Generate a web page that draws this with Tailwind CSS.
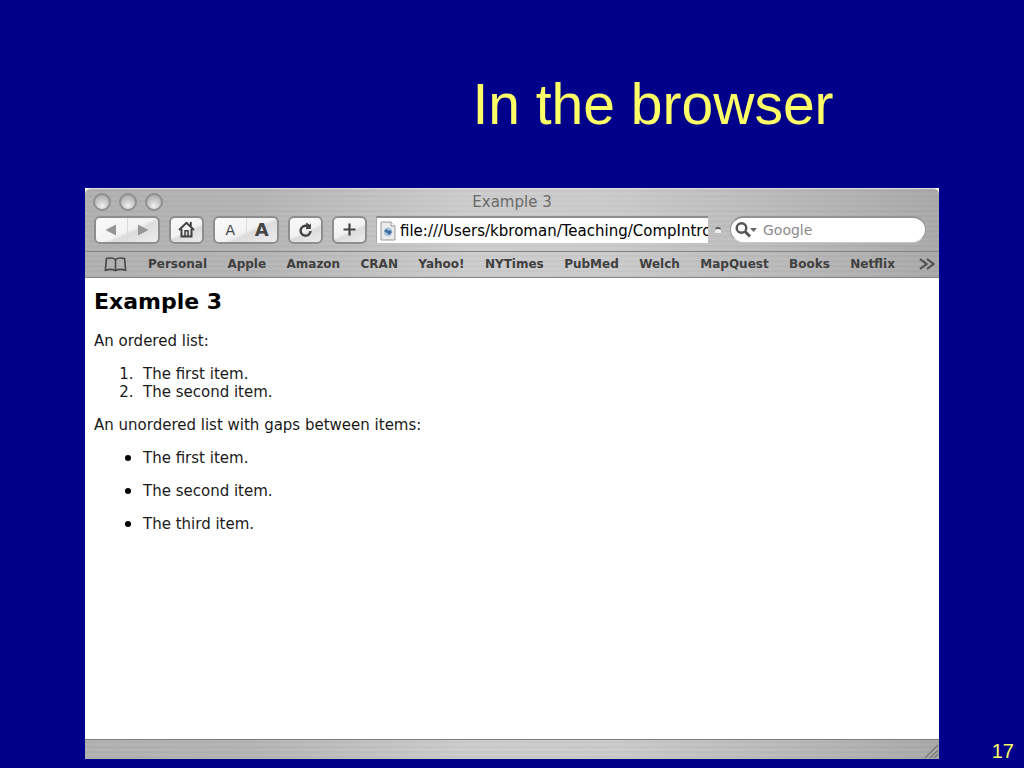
<!DOCTYPE html>
<html lang="en">
<head>
  <meta charset="UTF-8" />
  <meta name="viewport" content="width=device-width, initial-scale=1.0"/>
  <title>In the browser</title>
  <script src="https://cdn.jsdelivr.net/npm/@tailwindcss/browser@4"></script>
  <style>
    @counter-style spaced-decimal {
      system: extends decimal;
      suffix: ".\00a0\00a0";
    }

    .numbered {
      list-style-type: spaced-decimal;
    }

    .metal {
      background-image:
        repeating-linear-gradient(to bottom, rgba(255,255,255,.06) 0 1px, rgba(0,0,0,.02) 1px 3px, rgba(255,255,255,.02) 3px 5px),
        linear-gradient(to right, #b0b0b0 0%, #b4b4b4 20%, #cccccc 45%, #cacaca 62%, #b6b6b6 85%, #a8a8a8 100%);
    }

    .aqua {
      background-image: linear-gradient(155deg, #fafafa 0%, #f2f2f2 52%, #dcdcdc 60%, #ededed 100%);
    }

    .light {
      background-image: radial-gradient(circle at 50% 80%, #f0f0f0 0%, #cacaca 45%, #a0a0a0 100%);
    }
  </style>
</head>
<body class="min-h-screen flex flex-col bg-[#00008a] font-['Liberation_Sans',sans-serif] text-[#ffff66]">
  <header class="h-[188px] pl-[282px] pt-5 flex items-center justify-center">
    <h1 class="text-[57px] leading-[64px]">In the browser</h1>
  </header>

  <main class="flex-1 grid grid-cols-[85px_1fr_85px] pb-[9px]">
    <!-- Browser window -->
    <section class="col-start-2 flex flex-col bg-white text-black font-['DejaVu_Sans',sans-serif]">
      <div class="metal rounded-t-md border-t border-[#dcdcdc]">
        <!-- Title bar -->
        <div class="grid grid-cols-[1fr_auto_1fr] items-center h-[25px] px-2">
          <div class="flex gap-2">
            <button aria-label="Close" class="light size-[18px] rounded-full border-2 border-[#909090]"></button>
            <button aria-label="Minimize" class="light size-[18px] rounded-full border-2 border-[#909090]"></button>
            <button aria-label="Zoom" class="light size-[18px] rounded-full border-2 border-[#909090]"></button>
          </div>
          <h2 class="text-[15px] leading-[18px] text-[#6a6a6a]">Example 3</h2>
        </div>

        <!-- Toolbar -->
        <div class="flex items-center gap-[9px] h-[37px] pl-[9px] pr-[13px] pb-[7px] pt-px">
          <div class="aqua flex w-[66px] h-7 rounded-md border-2 border-[#8e8e8e] overflow-hidden">
            <button aria-label="Back" class="flex-1 flex items-center justify-center border-r border-[#dadada]">
              <svg class="w-3 h-3" viewBox="0 0 12 12" fill="#969696"><path d="M11 0.5V11.5L0.5 6Z"/></svg>
            </button>
            <button aria-label="Forward" class="flex-1 flex items-center justify-center">
              <svg class="w-3 h-3" viewBox="0 0 12 12" fill="#969696"><path d="M1 0.5V11.5L11.5 6Z"/></svg>
            </button>
          </div>
          <button aria-label="Home" class="aqua flex items-center justify-center w-[35px] h-7 rounded-md border-2 border-[#8e8e8e]">
            <svg class="w-[17px] h-[17px]" viewBox="0 0 17 17" fill="none" stroke="#404040" stroke-width="2">
              <path d="M1 9L8.5 1.8L16 9"/>
              <path d="M3.5 8V15.5H13.5V8"/>
              <path d="M12.8 1V5" />
              <path d="M7 15V9.8H10V15" stroke-width="1.5"/>
            </svg>
          </button>
          <div class="aqua flex w-[66px] h-7 rounded-md border-2 border-[#8e8e8e] overflow-hidden text-[#444]">
            <button aria-label="Smaller text" class="flex-1 text-sm leading-6 border-r border-[#dadada]">A</button>
            <button aria-label="Larger text" class="flex-1 text-lg leading-6 font-bold">A</button>
          </div>
          <button aria-label="Reload" class="aqua flex items-center justify-center w-[35px] h-7 rounded-md border-2 border-[#8e8e8e]">
            <svg class="w-[15px] h-[15px]" viewBox="0 0 15 15">
              <path d="M12.6 9A5 5 0 1 1 9 3.9" fill="none" stroke="#444" stroke-width="2.4"/>
              <path d="M8.2 0.6L13.4 4L8.2 7.4Z" fill="#444"/>
              <path d="M12.8 1.2V7H8.2Z" fill="#444"/>
            </svg>
          </button>
          <button aria-label="Add bookmark" class="aqua flex items-center justify-center w-[35px] h-7 rounded-md border-2 border-[#8e8e8e]">
            <svg class="w-[13px] h-[13px]" viewBox="0 0 13 13" stroke="#444" stroke-width="2.2"><path d="M6.5 0.5V12.5M0.5 6.5H12.5"/></svg>
          </button>
          <div class="flex-1 min-w-0 flex items-center gap-[7px]">
            <label class="flex-1 min-w-0 flex items-center gap-1 h-[27px] pl-[3px] bg-white border-t-2 border-l border-t-[#8e8e8e] border-l-[#a8a8a8]">
              <svg class="w-4 h-5 shrink-0" viewBox="0 0 16 20">
                <path d="M1 1H11L15 5V19H1Z" fill="#ececec" stroke="#999"/>
                <path d="M11 1V5H15" fill="#fff" stroke="#999"/>
                <circle cx="8" cy="11" r="4.4" fill="#a9c4dd"/>
                <path d="M4 10L7 8L8 10L10 9L12 11L9 14L7 12Z" fill="#3e6c9c"/>
              </svg>
              <input aria-label="Address" type="text" value="file:///Users/kbroman/Teaching/CompIntro/" class="flex-1 min-w-0 text-[15px] leading-5 text-black outline-none"/>
            </label>
            <span class="w-[6px] h-[6px] rounded-t-full bg-[#eee] border-t-2 border-[#555]"></span>
          </div>
          <label class="flex items-center gap-1 w-[196px] h-[27px] pl-1 bg-white rounded-full border-t-2 border-x border-[#949494] border-b border-b-[#c8c8c8]">
            <svg class="w-[23px] h-4 shrink-0" viewBox="0 0 23 16">
              <circle cx="6.5" cy="6" r="4.8" fill="none" stroke="#555" stroke-width="2.4"/>
              <path d="M10 9.5L15 14.5" stroke="#555" stroke-width="3"/>
              <path d="M15 6H22L18.5 10Z" fill="#666"/>
            </svg>
            <input aria-label="Search" type="text" placeholder="Google" class="flex-1 min-w-0 ml-px text-sm leading-5 placeholder-[#8a8a8a] outline-none"/>
          </label>
        </div>

        <!-- Bookmarks bar -->
        <nav class="flex items-center h-[27px] pl-[19px] pr-1 pb-px border-t border-b border-t-[#858585] border-b-[#858585] text-xs leading-4 font-bold text-[#404040]">
          <button aria-label="Bookmarks" class="mr-[21px]">
            <svg class="w-[23px] h-[15px]" viewBox="0 0 23 15" fill="none" stroke="#484848" stroke-width="1.6">
              <path d="M11.5 2.6C9.5 0.8 6 0.6 2.4 1.6L1.4 13.2C5 12 8.5 12 11.5 13.6C14.5 12 18 12 21.6 13.2L20.6 1.6C17 0.6 13.5 0.8 11.5 2.6Z"/>
              <path d="M11.5 2.6V13.6"/>
            </svg>
          </button>
          <div class="flex-1 flex justify-between">
            <a href="#">Personal</a>
            <a href="#">Apple</a>
            <a href="#">Amazon</a>
            <a href="#">CRAN</a>
            <a href="#">Yahoo!</a>
            <a href="#">NYTimes</a>
            <a href="#">PubMed</a>
            <a href="#">Welch</a>
            <a href="#">MapQuest</a>
            <a href="#">Books</a>
            <a href="#">Netflix</a>
          </div>
          <button aria-label="More bookmarks" class="ml-6">
            <svg class="w-4 h-3" viewBox="0 0 16 12" fill="none" stroke="#505050" stroke-width="2.2"><path d="M1 1L7.5 6L1 11M8 1L14.5 6L8 11"/></svg>
          </button>
        </nav>
      </div>

      <!-- Page -->
      <article class="flex-1 px-[9px] pt-[10px] text-[15px] leading-[18px] text-[#1a1a1a]">
        <h3 class="text-[22px] leading-7 font-bold text-black">Example 3</h3>
        <p class="mt-4">An ordered list:</p>
        <ol class="numbered pl-[49px] mt-[15px]">
          <li>The first item.</li>
          <li>The second item.</li>
        </ol>
        <p class="mt-[15px]">An unordered list with gaps between items:</p>
        <ul class="list-disc pl-[49px] mt-[14px] space-y-[14px] marker:text-[18px] marker:text-black">
          <li>The first item.</li>
          <li>The second item.</li>
          <li>The third item.</li>
        </ul>
      </article>

      <!-- Status bar -->
      <footer class="metal flex items-end justify-end h-5 border-t border-[#7c7c7c]">
        <svg class="w-4 h-4" viewBox="0 0 16 16" stroke="#777" stroke-width="1.3"><path d="M2 15L15 2M7 15L15 7M11 15L15 11"/></svg>
      </footer>
    </section>

    <p class="self-end justify-self-end pr-[10px] text-xl leading-5 -mb-0.5">17</p>
  </main>
</body>
</html>
